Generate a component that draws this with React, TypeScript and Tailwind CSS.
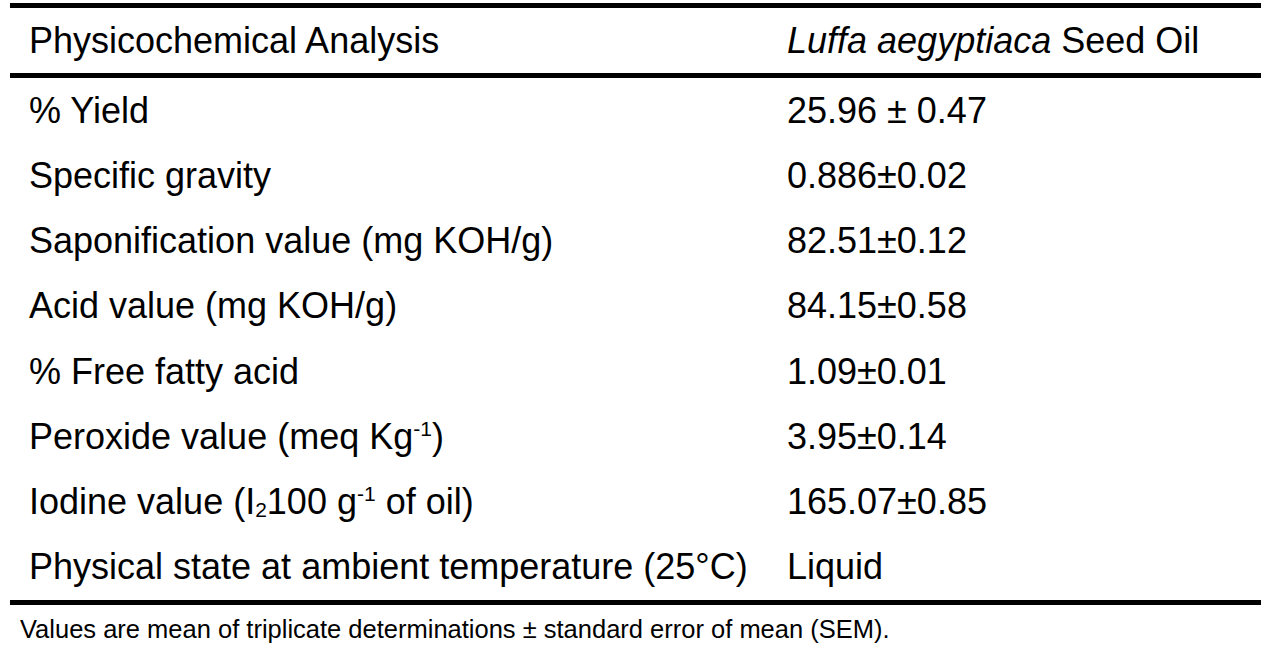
import React from "react";

const rows: { label: React.ReactNode; value: string }[] = [
  { label: "% Yield", value: "25.96 ± 0.47" },
  { label: "Specific gravity", value: "0.886±0.02" },
  { label: "Saponification value (mg KOH/g)", value: "82.51±0.12" },
  { label: "Acid value (mg KOH/g)", value: "84.15±0.58" },
  { label: "% Free fatty acid", value: "1.09±0.01" },
  {
    label: (
      <>
        Peroxide value (meq Kg
        <span className="relative top-[-13px] text-[21px] leading-none">-1</span>)
      </>
    ),
    value: "3.95±0.14",
  },
  {
    label: (
      <>
        Iodine value (I
        <span className="relative top-[3px] text-[21px] leading-none">2</span>100 g
        <span className="relative top-[-13px] text-[21px] leading-none">-1</span> of oil)
      </>
    ),
    value: "165.07±0.85",
  },
  { label: "Physical state at ambient temperature (25°C)", value: "Liquid" },
];

export default function App() {
  return (
    <div
      className="w-[1278px] h-[656px] bg-white text-black overflow-hidden"
      style={{ fontFamily: '"Liberation Sans", Arial, sans-serif' }}
    >
      <div className="pt-[3px] pl-[10px] w-[1261px]">
        <div className="h-[5px] bg-black" />
        <div className="grid grid-cols-[777px_1fr] h-[65px] items-center text-[36px] leading-none">
          <div className="pl-[19px]">Physicochemical Analysis</div>
          <div>
            <span className="italic">Luffa aegyptiaca</span> Seed Oil
          </div>
        </div>
        <div className="h-[5px] bg-black" />
        <div className="flex flex-col">
          {rows.map((r, i) => (
            <div
              key={i}
              className="grid grid-cols-[777px_1fr] h-[65.25px] items-center text-[36px] leading-none"
            >
              <div className="pl-[19px] whitespace-nowrap">{r.label}</div>
              <div className="whitespace-nowrap">{r.value}</div>
            </div>
          ))}
        </div>
        <div className="h-[5px] bg-black" />
        <div className="pl-[10px] pt-[12px] text-[25.5px] leading-none whitespace-nowrap">
          Values are mean of triplicate determinations ± standard error of mean (SEM).
        </div>
      </div>
    </div>
  );
}
